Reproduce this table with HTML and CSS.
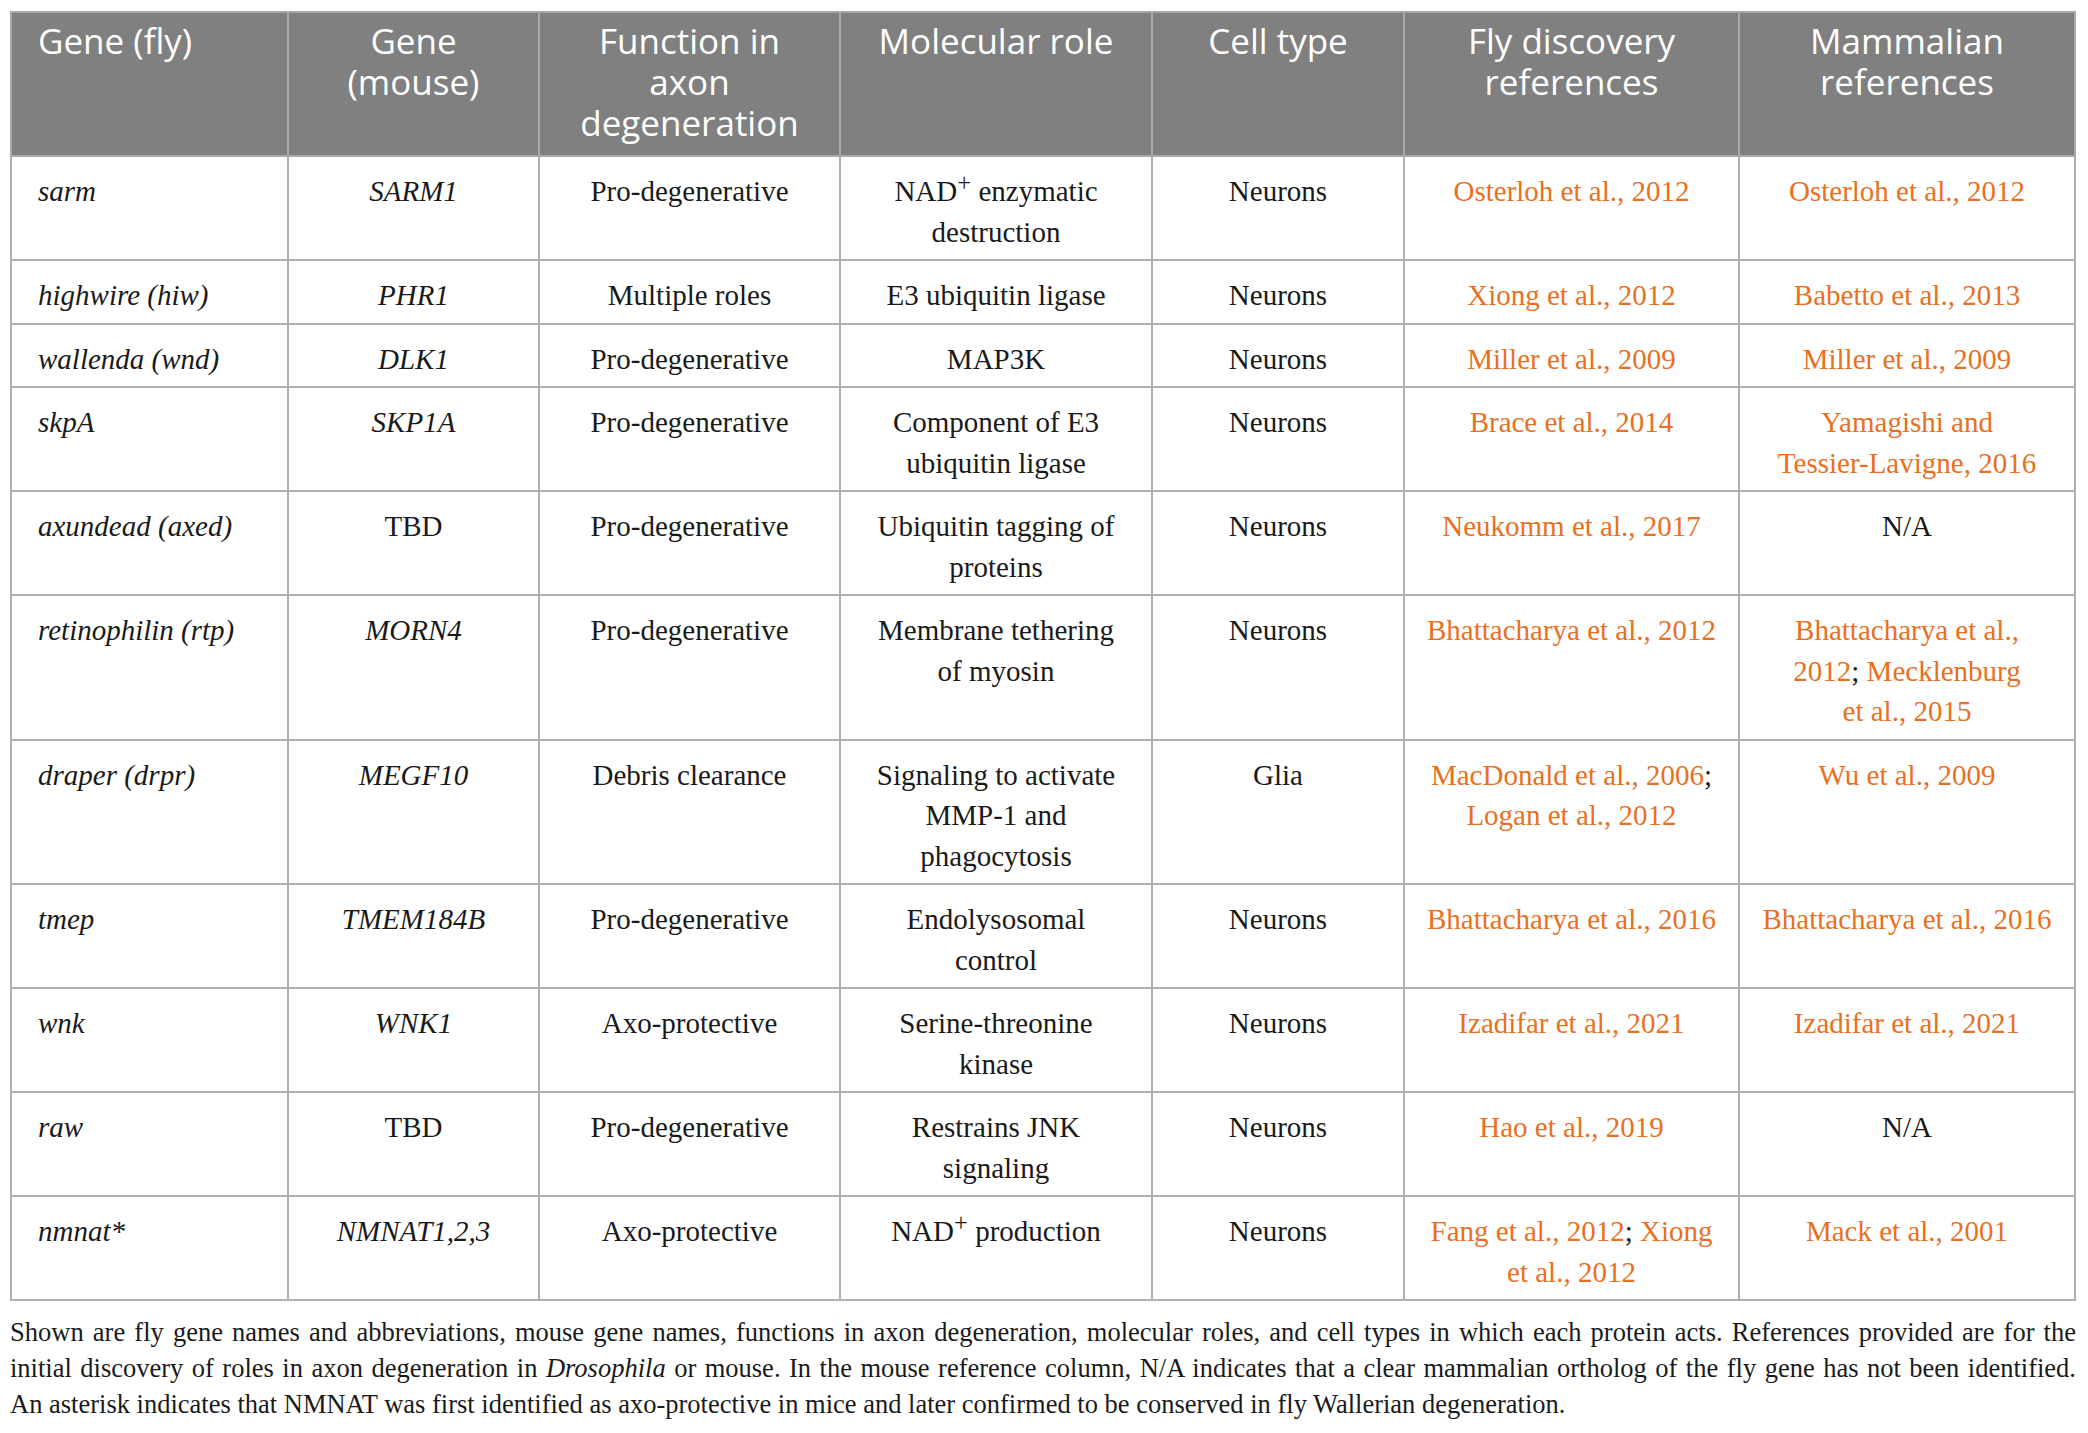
FILE: index.html
```html
<!DOCTYPE html>
<html>
<head>
<meta charset="utf-8">
<link rel="stylesheet" href="styles.css">
</head>
<body>
<div class="page">
<table class="genes">
  <colgroup>
    <col class="c1"><col class="c2"><col class="c3"><col class="c4"><col class="c5"><col class="c6"><col class="c7">
  </colgroup>
  <thead>
    <tr>
      <th class="left">Gene (fly)</th>
      <th>Gene<br>(mouse)</th>
      <th>Function in<br>axon<br>degeneration</th>
      <th>Molecular role</th>
      <th>Cell type</th>
      <th>Fly discovery<br>references</th>
      <th>Mammalian<br>references</th>
    </tr>
  </thead>
  <tbody>
    <tr>
      <td class="left"><i>sarm</i></td><td><i>SARM1</i></td><td>Pro-degenerative</td>
      <td>NAD<sup>+</sup> enzymatic<br>destruction</td><td>Neurons</td>
      <td><span class="ref">Osterloh et al., 2012</span></td><td><span class="ref">Osterloh et al., 2012</span></td>
    </tr>
    <tr>
      <td class="left"><i>highwire (hiw)</i></td><td><i>PHR1</i></td><td>Multiple roles</td>
      <td>E3 ubiquitin ligase</td><td>Neurons</td>
      <td><span class="ref">Xiong et al., 2012</span></td><td><span class="ref">Babetto et al., 2013</span></td>
    </tr>
    <tr>
      <td class="left"><i>wallenda (wnd)</i></td><td><i>DLK1</i></td><td>Pro-degenerative</td>
      <td>MAP3K</td><td>Neurons</td>
      <td><span class="ref">Miller et al., 2009</span></td><td><span class="ref">Miller et al., 2009</span></td>
    </tr>
    <tr>
      <td class="left"><i>skpA</i></td><td><i>SKP1A</i></td><td>Pro-degenerative</td>
      <td>Component of E3<br>ubiquitin ligase</td><td>Neurons</td>
      <td><span class="ref">Brace et al., 2014</span></td><td><span class="ref">Yamagishi and<br>Tessier-Lavigne, 2016</span></td>
    </tr>
    <tr>
      <td class="left"><i>axundead (axed)</i></td><td>TBD</td><td>Pro-degenerative</td>
      <td>Ubiquitin tagging of<br>proteins</td><td>Neurons</td>
      <td><span class="ref">Neukomm et al., 2017</span></td><td>N/A</td>
    </tr>
    <tr>
      <td class="left"><i>retinophilin (rtp)</i></td><td><i>MORN4</i></td><td>Pro-degenerative</td>
      <td>Membrane tethering<br>of myosin</td><td>Neurons</td>
      <td><span class="ref">Bhattacharya et al., 2012</span></td><td><span class="ref">Bhattacharya et al.,<br>2012</span>; <span class="ref">Mecklenburg<br>et al., 2015</span></td>
    </tr>
    <tr>
      <td class="left"><i>draper (drpr)</i></td><td><i>MEGF10</i></td><td>Debris clearance</td>
      <td>Signaling to activate<br>MMP-1 and<br>phagocytosis</td><td>Glia</td>
      <td><span class="ref">MacDonald et al., 2006</span>;<br><span class="ref">Logan et al., 2012</span></td><td><span class="ref">Wu et al., 2009</span></td>
    </tr>
    <tr>
      <td class="left"><i>tmep</i></td><td><i>TMEM184B</i></td><td>Pro-degenerative</td>
      <td>Endolysosomal<br>control</td><td>Neurons</td>
      <td><span class="ref">Bhattacharya et al., 2016</span></td><td><span class="ref">Bhattacharya et al., 2016</span></td>
    </tr>
    <tr>
      <td class="left"><i>wnk</i></td><td><i>WNK1</i></td><td>Axo-protective</td>
      <td>Serine-threonine<br>kinase</td><td>Neurons</td>
      <td><span class="ref">Izadifar et al., 2021</span></td><td><span class="ref">Izadifar et al., 2021</span></td>
    </tr>
    <tr>
      <td class="left"><i>raw</i></td><td>TBD</td><td>Pro-degenerative</td>
      <td>Restrains JNK<br>signaling</td><td>Neurons</td>
      <td><span class="ref">Hao et al., 2019</span></td><td>N/A</td>
    </tr>
    <tr>
      <td class="left"><i>nmnat*</i></td><td><i>NMNAT1,2,3</i></td><td>Axo-protective</td>
      <td>NAD<sup>+</sup> production</td><td>Neurons</td>
      <td><span class="ref">Fang et al., 2012</span>; <span class="ref">Xiong<br>et al., 2012</span></td><td><span class="ref">Mack et al., 2001</span></td>
    </tr>
  </tbody>
</table>
<div class="caption">
  <span class="line">Shown are fly gene names and abbreviations, mouse gene names, functions in axon degeneration, molecular roles, and cell types in which each protein acts. References provided are for the</span>
  <span class="line">initial discovery of roles in axon degeneration in <i>Drosophila</i> or mouse. In the mouse reference column, N/A indicates that a clear mammalian ortholog of the fly gene has not been identified.</span>
  <span class="line last">An asterisk indicates that NMNAT was first identified as axo-protective in mice and later confirmed to be conserved in fly Wallerian degeneration.</span>
</div>
</div>
</body>
</html>
```

FILE: styles.css
```css
html, body {
  margin: 0;
  padding: 0;
  background: #ffffff;
}
.page {
  padding: 11px 12px 0 10px;
}
.genes {
  width: 2066px;
  border-collapse: collapse;
  table-layout: fixed;
  font-family: "Liberation Serif", "Times New Roman", serif;
  font-size: 29px;
  color: #1a1a1a;
}
.c1 { width: 277px; }
.c2 { width: 251px; }
.c3 { width: 301px; }
.c4 { width: 312px; }
.c5 { width: 252px; }
.c6 { width: 335px; }
.c7 { width: 336px; }
.genes th {
  background: #808080;
  color: #ffffff;
  font-family: "Open Sans", "Liberation Sans", sans-serif;
  font-weight: 400;
  font-size: 35px;
  line-height: 41px;
  text-align: center;
  vertical-align: top;
  padding: 7px 8px 12px;
  border: 2px solid #a8a8a8;
}
.genes td {
  text-align: center;
  vertical-align: top;
  line-height: 40.5px;
  padding: 14px 8px 7px;
  border: 2px solid #b0b0b0;
}
.genes th.left, .genes td.left {
  text-align: left;
  padding-left: 26px;
}
.genes sup {
  font-size: 0.85em;
  line-height: 0;
  vertical-align: 0.42em;
}
.ref {
  color: #e8701e;
}
.caption {
  font-family: "Liberation Serif", "Times New Roman", serif;
  font-size: 26.5px;
  line-height: 36px;
  color: #1a1a1a;
  width: 2066px;
  padding-top: 13px;
}
.caption .line {
  display: block;
  text-align: justify;
  text-align-last: justify;
  white-space: nowrap;
}
.caption .line.last {
  text-align-last: left;
}
```
